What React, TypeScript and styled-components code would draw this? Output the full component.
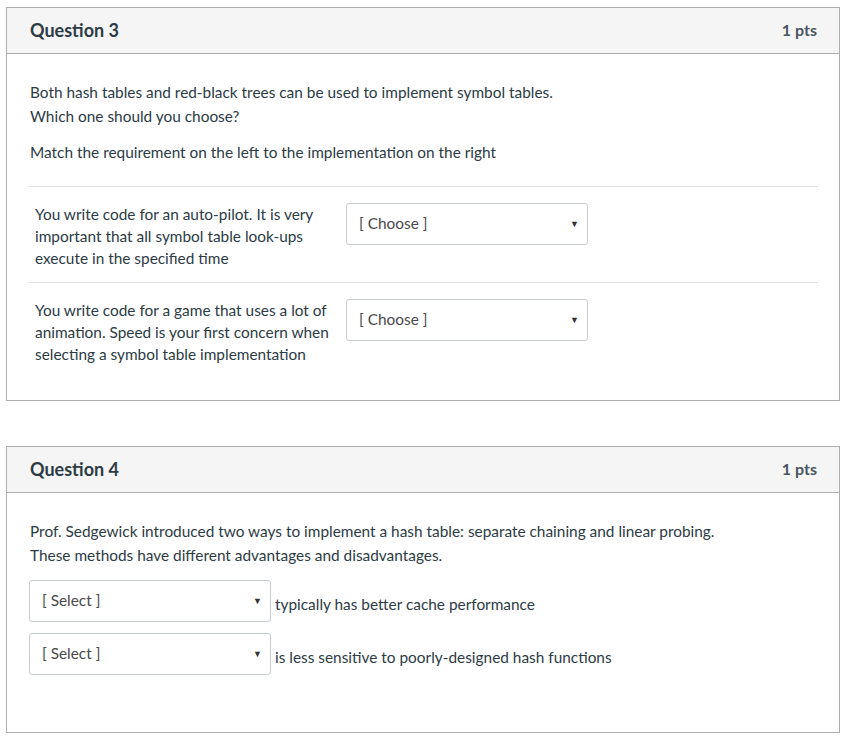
import styled, { createGlobalStyle } from 'styled-components'

const GlobalStyle = createGlobalStyle`
  body {
    margin: 0;
    background: #fff;
    font-family: Lato, "Open Sans", "Liberation Sans", sans-serif;
    color: #2d3b45;
  }
`

const Page = styled.div`
  padding: 7px 18px 16px 6px;
  display: flex;
  flex-direction: column;
  gap: 45px;
`

const Card = styled.section`
  width: 834px;
  box-sizing: border-box;
  border: 1px solid #aeaeae;
`

const CardHeader = styled.header`
  height: 46px;
  box-sizing: border-box;
  display: flex;
  align-items: center;
  justify-content: space-between;
  padding: 0 22px 2px 23px;
  background: #f5f5f5;
  border-bottom: 1px solid #aeaeae;
`

const Title = styled.h2`
  margin: 0;
  font-size: 18px;
  font-weight: 700;
  color: #2d3b45;
`

const Points = styled.span`
  font-size: 16px;
  font-weight: 700;
  color: #4a5660;
`

const CardBody = styled.div<{ $bottom: number }>`
  padding: 26px 21px ${({ $bottom }) => $bottom}px 22px;
  font-size: 15.4px;
  line-height: 24px;
`

const Para = styled.p<{ $gap?: number }>`
  margin: 0 0 ${({ $gap }) => $gap ?? 12}px 1px;
`

const MatchRow = styled.div<{ $last?: boolean }>`
  display: flex;
  align-items: flex-start;
  gap: 11px;
  padding: 16px 0 ${({ $last }) => ($last ? 0 : 13)}px 6px;
  border-top: 1px solid #dedede;
  line-height: 22px;
`

const MatchText = styled.div`
  width: 300px;
`

const Select = styled.div<{ $width: number }>`
  width: ${({ $width }) => $width}px;
  height: 42px;
  box-sizing: border-box;
  display: flex;
  align-items: flex-start;
  justify-content: space-between;
  padding: 8px 8px 0 12px;
  border: 1px solid #c7cdd1;
  border-radius: 3px;
  background: #fff;
  color: #4a4a4a;
  font-size: 15.4px;
  line-height: 22px;
  flex-shrink: 0;
`

const Caret = styled.span`
  font-size: 9px;
  color: #333;
  padding-top: 1px;
`

const DropRow = styled.div`
  display: flex;
  align-items: flex-start;
  gap: 4px;
  margin-bottom: 11px;
`

const DropLabel = styled.span`
  padding-top: 13px;
  line-height: 22px;
`

const matches = [
  'You write code for an auto-pilot. It is very important that all symbol table look-ups execute in the specified time',
  'You write code for a game that uses a lot of animation. Speed is your first concern when selecting a symbol table implementation',
]

const drops = [
  'typically has better cache performance',
  'is less sensitive to poorly-designed hash functions',
]

export default function App() {
  return (
    <>
      <GlobalStyle />
      <Page>
        <Card>
          <CardHeader>
            <Title>Question 3</Title>
            <Points>1 pts</Points>
          </CardHeader>
          <CardBody $bottom={35}>
            <Para>
              Both hash tables and red-black trees can be used to implement symbol tables.
              <br />
              Which one should you choose?
            </Para>
            <Para $gap={22}>Match the requirement on the left to the implementation on the right</Para>
            {matches.map((m, i) => (
              <MatchRow key={i} $last={i === matches.length - 1}>
                <MatchText>{m}</MatchText>
                <Select $width={242}>
                  <span>[ Choose ]</span>
                  <Caret>▼</Caret>
                </Select>
              </MatchRow>
            ))}
          </CardBody>
        </Card>
        <Card>
          <CardHeader>
            <Title>Question 4</Title>
            <Points>1 pts</Points>
          </CardHeader>
          <CardBody $bottom={46}>
            <Para $gap={13}>
              Prof. Sedgewick introduced two ways to implement a hash table: separate chaining and linear probing.
              <br />
              These methods have different advantages and disadvantages.
            </Para>
            {drops.map((d, i) => (
              <DropRow key={i}>
                <Select $width={242}>
                  <span>[ Select ]</span>
                  <Caret>▼</Caret>
                </Select>
                <DropLabel>{d}</DropLabel>
              </DropRow>
            ))}
          </CardBody>
        </Card>
      </Page>
    </>
  )
}
